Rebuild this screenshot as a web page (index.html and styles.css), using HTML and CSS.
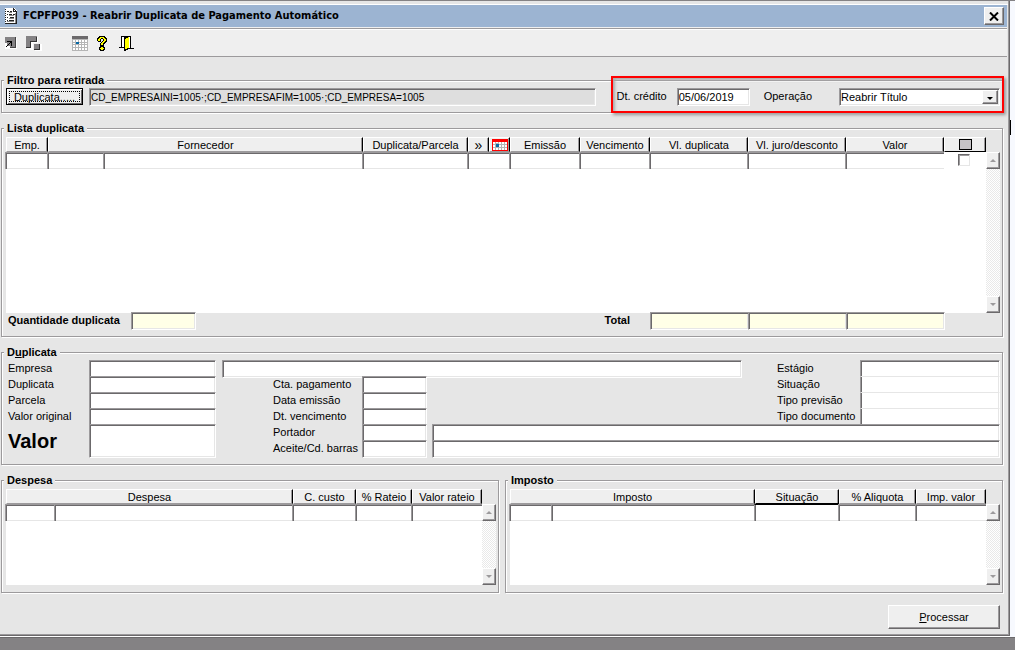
FILE: index.html
```html
<!DOCTYPE html>
<html lang="pt-BR">
<head>
    <meta charset="UTF-8">
    <meta name="viewport" content="width=device-width, initial-scale=1.0">
    <title>FCPFP039 - Reabrir Duplicata de Pagamento Automático</title>
    <link rel="stylesheet" href="styles.css">
</head>
<body>
    <div class="workspace">
        <main class="window">
            <header class="titlebar">
                <svg class="icon" width="13" height="16" viewBox="0 0 13 16" shape-rendering="crispEdges">
                    <path d="M0 0h9l3 3v13H0z" fill="#fff"/>
                    <path d="M0 1h1v1H0zM0 3h1v1H0zM0 5h1v1H0zM0 7h1v1H0zM0 9h1v1H0zM0 11h1v1H0zM0 13h1v1H0zM8 0h1v3h3v1H8zM9 1h1v1H9zM10 2h1v1h-1zM11 3h1v13H0v-1h11z" fill="#222"/>
                    <path d="M2 3h2v1H2zM2 6h1v1H2zM4 6h3v1H4zM2 9h1v1H2zM5 9h4v1H5zM2 12h1v1H2zM4 12h5v1H4zM5 3h2v1H5zM8 6h2v1H8z" fill="#222"/>
                    <path d="M4 4h3v1H4zM4 7h5v1H4zM4 10h5v1H4zM2 13h7v1H2zM10 5h1v10h-1z" fill="#8a8a8a"/>
                </svg>
                <h1>FCPFP039 - Reabrir Duplicata de Pagamento Automático</h1>
                <button class="close" aria-label="Fechar">
                    <svg width="10" height="9" viewBox="0 0 10 9"><path d="M1 0.5 9 8.5M9 0.5 1 8.5" stroke="#000" stroke-width="2"/></svg>
                </button>
            </header>

            <nav class="toolbar">
                <button class="tool" aria-label="Voltar">
                    <svg width="12" height="12" viewBox="0 0 12 12" shape-rendering="crispEdges">
                        <path d="M0 1h12v11H0z" fill="#fff"/>
                        <path d="M0 0h11v11H5V9H2V6H0z" fill="#848284"/>
                        <path d="M10 0h1v11H5v-1h5z" fill="#444"/>
                        <path d="M2 4h5v5H6V6H5v1H4v1H3v1H2v1H1V9h1V8h1V7h1V6h1V5H2z" fill="#000"/>
                    </svg>
                </button>
                <button class="tool" aria-label="Janelas">
                    <svg width="16" height="15" viewBox="0 0 16 15" shape-rendering="crispEdges">
                        <path d="M1 1h11v6H7v7H1zM9 8h7v7H9z" fill="#fff"/>
                        <path d="M0 0h11v6H5v6H0zM8 8h6v6H8z" fill="#848284"/>
                        <path d="M10 1h1v5H5v6H0v-1h4V5h6zM13 8h1v6H8v-1h5z" fill="#333"/>
                    </svg>
                </button>
                <button class="tool tool-gap" aria-label="Calendário">
                    <svg width="16" height="15" viewBox="0 0 16 15" shape-rendering="crispEdges">
                        <path d="M0 0h16v15H0z" fill="#b5b5b5"/>
                        <path d="M0 0h16v3H0z" fill="#6b696b"/>
                        <path d="M1 4h2v2H1zM4 4h2v2H4zM7 4h2v2H7zM10 4h2v2h-2zM13 4h2v2h-2zM1 7h2v1H1zM7 7h2v1H7zM10 7h2v1h-2zM13 7h2v1h-2zM1 9h2v2H1zM4 9h2v2H4zM7 9h2v2H7zM10 9h2v2h-2zM13 9h2v2h-2zM1 12h2v2H1zM4 12h2v2H4zM7 12h2v2H7zM10 12h2v2h-2zM13 12h2v2h-2z" fill="#fff"/>
                        <path d="M4 6h3v2H4z" fill="#0869a5"/>
                    </svg>
                </button>
                <button class="tool" aria-label="Ajuda">
                    <svg width="13" height="15" viewBox="0 0 13 15" shape-rendering="crispEdges">
                        <path d="M2 0h6v1h1v1h1v4H9v1H8v1H7v2H3V7h1V6h1V5h1V3H4v3H1V5H0V2h1V1h1zM3 10h4v1h1v3H7v1H3v-1H2v-3h1z" fill="#000"/>
                        <path d="M3 1h4v1h1v1h1v2H8v1H7v1H6v2H4V7h1V6h1V5h1V3H6V2H4v1H3v2H1V3h1V2h1zM4 11h2v1h1v1H6v1H4v-1H3v-1h1z" fill="#ff0"/>
                    </svg>
                </button>
                <button class="tool" aria-label="Sair">
                    <svg width="15" height="15" viewBox="0 0 15 15" shape-rendering="crispEdges">
                        <path d="M2 0h10v12h3v1H9v1H7v1H5v-3H0v-1h2z" fill="#000"/>
                        <path d="M3 1h2v10H3z" fill="#fff"/>
                        <path d="M10 1h1v11h-1z" fill="#fff"/>
                        <path d="M6 3h1V2h2V1h1v11H8v1H6z" fill="#ff0"/>
                    </svg>
                </button>
            </nav>

            <form class="content">
                <fieldset class="panel">
                    <legend>Filtro para retirada</legend>
                    <div class="filter">
                        <button type="button" class="btn-default">Duplicata.....</button>
                        <input type="text" class="field filter-text" aria-label="Filtro" value="CD_EMPRESAINI=1005·;CD_EMPRESAFIM=1005·;CD_EMPRESA=1005" readonly>
                        <div class="highlight">
                            <label for="credito">Dt. crédito</label>
                            <input type="text" id="credito" class="field date" value="05/06/2019">
                            <label for="operacao">Operação</label>
                            <div class="combo">
                                <select id="operacao" class="field">
                                    <option>Reabrir Título</option>
                                </select>
                                <span class="combo-arrow"></span>
                            </div>
                        </div>
                    </div>
                </fieldset>

                <fieldset class="panel">
                    <legend>Lista duplicata</legend>
                    <div class="list list-tall">
                        <table>
                            <colgroup>
                                <col class="w42"><col class="w56"><col><col class="w105"><col class="w21"><col class="w21">
                                <col class="w70"><col class="w70"><col class="w98"><col class="w98"><col class="w98"><col class="w42">
                            </colgroup>
                            <thead>
                                <tr>
                                    <th>Emp.</th>
                                    <th colspan="2">Fornecedor</th>
                                    <th>Duplicata/Parcela</th>
                                    <th class="more">»</th>
                                    <th class="icon-head">
                                        <svg width="16" height="12" viewBox="0 0 16 12" shape-rendering="crispEdges">
                                            <path d="M0 0h16v12H0z" fill="#f00"/>
                                            <path d="M1 3h14v8H1z" fill="#b5b5b5"/>
                                            <path d="M1 3h2v2H1zM4 3h2v1H4zM7 3h2v2H7zM10 3h2v2h-2zM13 3h2v2h-2zM1 6h2v2H1zM7 6h2v2H7zM10 6h2v2h-2zM13 6h2v2h-2zM1 9h2v2H1zM4 9h2v2H4zM7 9h2v2H7zM10 9h2v2h-2zM13 9h2v2h-2z" fill="#fff"/>
                                            <path d="M4 5h3v3H4z" fill="#0869a5"/>
                                        </svg>
                                    </th>
                                    <th>Emissão</th>
                                    <th>Vencimento</th>
                                    <th>Vl. duplicata</th>
                                    <th>Vl. juro/desconto</th>
                                    <th>Valor</th>
                                    <th class="icon-head active"><span class="mark"></span></th>
                                </tr>
                            </thead>
                            <tbody>
                                <tr>
                                    <td><input type="text" class="field" aria-label="Emp."></td>
                                    <td><input type="text" class="field" aria-label="Código do fornecedor"></td>
                                    <td><input type="text" class="field" aria-label="Fornecedor"></td>
                                    <td><input type="text" class="field" aria-label="Duplicata/Parcela"></td>
                                    <td colspan="2"><input type="text" class="field" aria-label="Sequência"></td>
                                    <td><input type="text" class="field" aria-label="Emissão"></td>
                                    <td><input type="text" class="field" aria-label="Vencimento"></td>
                                    <td><input type="text" class="field" aria-label="Vl. duplicata"></td>
                                    <td><input type="text" class="field" aria-label="Vl. juro/desconto"></td>
                                    <td><input type="text" class="field" aria-label="Valor"></td>
                                    <td class="check"><input type="checkbox" aria-label="Selecionar"></td>
                                </tr>
                            </tbody>
                        </table>
                        <div class="scrollbar">
                            <button type="button" class="up" aria-label="Subir"></button>
                            <button type="button" class="down" aria-label="Descer"></button>
                        </div>
                    </div>
                    <div class="totals">
                        <label for="qtd">Quantidade duplicata</label>
                        <input type="text" id="qtd" class="field sum-small" readonly>
                        <label for="total" class="total-label">Total</label>
                        <input type="text" id="total" class="field sum" readonly>
                        <input type="text" class="field sum" aria-label="Total juro/desconto" readonly>
                        <input type="text" class="field sum" aria-label="Total valor" readonly>
                    </div>
                </fieldset>

                <fieldset class="panel">
                    <legend>D<u>u</u>plicata</legend>
                    <div class="details">
                        <label class="l1 r1" for="empresa">Empresa</label>
                        <input type="text" id="empresa" class="field f1 r1">
                        <label class="l1 r2" for="duplicata">Duplicata</label>
                        <input type="text" id="duplicata" class="field f1 r2">
                        <label class="l1 r3" for="parcela">Parcela</label>
                        <input type="text" id="parcela" class="field f1 r3">
                        <label class="l1 r4" for="original">Valor original</label>
                        <input type="text" id="original" class="field f1 r4">
                        <label class="l1 big" for="valor">Valor</label>
                        <input type="text" id="valor" class="field f1 big">

                        <input type="text" class="field name r1" aria-label="Nome da empresa">
                        <label class="l2 r2" for="conta">Cta. pagamento</label>
                        <input type="text" id="conta" class="field f2 r2">
                        <label class="l2 r3" for="emissao">Data emissão</label>
                        <input type="text" id="emissao" class="field f2 r3">
                        <label class="l2 r4" for="vencimento">Dt. vencimento</label>
                        <input type="text" id="vencimento" class="field f2 r4">
                        <label class="l2 r5" for="portador">Portador</label>
                        <input type="text" id="portador" class="field f2 r5">
                        <label class="l2 r6" for="aceite">Aceite/Cd. barras</label>
                        <input type="text" id="aceite" class="field f2 r6">

                        <label class="l3 r1" for="estagio">Estágio</label>
                        <input type="text" id="estagio" class="field f3 r1">
                        <label class="l3 r2" for="situacao">Situação</label>
                        <input type="text" id="situacao" class="field f3 r2 joined">
                        <label class="l3 r3" for="previsao">Tipo previsão</label>
                        <input type="text" id="previsao" class="field f3 r3 joined">
                        <label class="l3 r4" for="documento">Tipo documento</label>
                        <input type="text" id="documento" class="field f3 r4 joined">

                        <input type="text" class="field wide r5" aria-label="Nome do portador">
                        <input type="text" class="field wide r6" aria-label="Código de barras">
                    </div>
                </fieldset>

                <div class="columns">
                    <fieldset class="panel">
                        <legend>Despesa</legend>
                        <div class="list">
                            <table>
                                <colgroup><col class="w49"><col><col class="w63"><col class="w56"><col class="w70"></colgroup>
                                <thead>
                                    <tr>
                                        <th colspan="2">Despesa</th>
                                        <th>C. custo</th>
                                        <th>% Rateio</th>
                                        <th>Valor rateio</th>
                                    </tr>
                                </thead>
                                <tbody>
                                    <tr>
                                        <td><input type="text" class="field" aria-label="Código da despesa"></td>
                                        <td><input type="text" class="field" aria-label="Despesa"></td>
                                        <td><input type="text" class="field" aria-label="C. custo"></td>
                                        <td><input type="text" class="field" aria-label="% Rateio"></td>
                                        <td><input type="text" class="field" aria-label="Valor rateio"></td>
                                    </tr>
                                </tbody>
                            </table>
                            <div class="scrollbar">
                                <button type="button" class="up" aria-label="Subir"></button>
                                <button type="button" class="down" aria-label="Descer"></button>
                            </div>
                        </div>
                    </fieldset>

                    <fieldset class="panel">
                        <legend>Imposto</legend>
                        <div class="list">
                            <table>
                                <colgroup><col class="w42"><col><col class="w84"><col class="w77"><col class="w70"></colgroup>
                                <thead>
                                    <tr>
                                        <th colspan="2">Imposto</th>
                                        <th class="active">Situação</th>
                                        <th>% Aliquota</th>
                                        <th>Imp. valor</th>
                                    </tr>
                                </thead>
                                <tbody>
                                    <tr>
                                        <td><input type="text" class="field" aria-label="Código do imposto"></td>
                                        <td><input type="text" class="field" aria-label="Imposto"></td>
                                        <td><input type="text" class="field under-active" aria-label="Situação"></td>
                                        <td><input type="text" class="field" aria-label="% Aliquota"></td>
                                        <td><input type="text" class="field" aria-label="Imp. valor"></td>
                                    </tr>
                                </tbody>
                            </table>
                            <div class="scrollbar">
                                <button type="button" class="up" aria-label="Subir"></button>
                                <button type="button" class="down" aria-label="Descer"></button>
                            </div>
                        </div>
                    </fieldset>
                </div>

                <div class="actions">
                    <button type="button" class="btn"><u>P</u>rocessar</button>
                </div>
            </form>
        </main>
    </div>
</body>
</html>
```

FILE: styles.css
```css
*{
    box-sizing: border-box;
}
body{
    margin: 0;
    min-height: 100vh;
    background: #848284;
    color: #000;
    font: 11px/16px "Liberation Sans", Arial, sans-serif;
}
button,input,select{
    font: inherit;
    color: inherit;
    margin: 0;
    padding: 0;
    border-radius: 0;
}
svg{
    display: block;
}
u{
    text-underline-offset: 1px;
}

/* WINDOW */
.workspace{
    position: relative;
    padding-right: 5px;
    border-top: 1px solid #848284;
    border-bottom: 1px solid #6b696b;
    background: #f7f9fe;
}
.workspace::after{
    content: "";
    position: absolute;
    top: 119px;
    right: 4px;
    width: 1px;
    height: 15px;
    background: #000;
}
.window{
    padding-top: 4px;
    background: #e6e6e6;
    border-right: 1px solid #6b696b;
    border-bottom: 1px solid #6b696b;
    box-shadow: inset -1px -1px #9c9a9c, inset 0 3px #e6e6e6, inset 0 4px #fff, 0 1px #fff;
    margin-bottom: 1px;
}
.titlebar{
    display: flex;
    align-items: center;
    height: 22px;
    margin-right: 2px;
    padding: 0 3px 0 5px;
    background: #9cb4d2;
}
.titlebar h1{
    flex: 1;
    margin: 0 0 0 5px;
    font: bold 11px/16px "DejaVu Sans Condensed", Tahoma, sans-serif;
}
.close{
    display: flex;
    align-items: center;
    justify-content: center;
    width: 20px;
    height: 18px;
    background: #efefef;
    border: 1px solid;
    border-color: #fff #6b696b #6b696b #fff;
    box-shadow: inset -1px -1px #9c9a9c;
}
.toolbar{
    display: flex;
    align-items: center;
    gap: 9px;
    height: 30px;
    margin-right: 2px;
    padding: 2px 5px 0;
    background: #efefef;
    border-top: 1px solid #efefef;
    border-bottom: 1px solid #9c9a9c;
    box-shadow: inset 0 1px #9c9a9c, inset 0 2px #fff;
}
.tool{
    background: none;
    border: 0;
}
.tool-gap{
    margin-left: 21px;
}
.content{
    display: flex;
    flex-direction: column;
    gap: 7px;
    padding: 15px 6px 6px 1px;
}

/* PANELS */
.panel{
    min-width: 0;
    margin: 0;
    padding: 0 2px 7px 4px;
    border: 1px solid #9c9a9c;
    box-shadow: 1px 1px #fff, inset 1px 1px #fff;
}
.panel legend{
    margin-left: -2px;
    padding: 0 3px;
    font-weight: bold;
    background: #e6e6e6;
}
.columns{
    display: flex;
    gap: 6px;
}
.columns .panel{
    flex: 1;
}

/* FIELDS */
.field{
    display: block;
    height: 18px;
    padding: 0 1px;
    background: #fff;
    border: 1px solid;
    border-color: #9c9a9c #fff #fff #9c9a9c;
    box-shadow: inset 1px 1px #6b696b, inset -1px -1px #e6e6e6;
    outline: 0;
}
.field.joined{
    border-top-color: #e6e6e6;
    box-shadow: inset 1px 0 #6b696b, inset -1px -1px #e6e6e6;
}

/* FILTER */
.filter{
    display: flex;
    height: 17px;
}
.btn-default{
    width: 77px;
    height: 17px;
    margin-right: 6px;
    padding-top: 1px;
    line-height: 14px;
    background: #efefef;
    border: 1px solid #000;
    box-shadow: inset 1px 1px #fff, inset -1px -1px #6b696b;
    outline: 1px dotted #000;
    outline-offset: -4px;
}
.filter-text{
    flex: 1;
    background: #dedede;
    font-size: 10px;
}
.highlight{
    position: relative;
    display: flex;
    margin-left: 15px;
    padding-left: 6px;
}
.highlight::after{
    content: "";
    position: absolute;
    top: -12px;
    right: -4px;
    bottom: -8px;
    left: 0;
    border: 2px solid #f00;
    box-shadow: 2px 2px 3px #999, inset 2px 2px 3px #aaa;
    pointer-events: none;
}
.date{
    width: 73px;
    margin: 0 14px 0 10px;
}
.combo{
    position: relative;
    width: 161px;
    margin-left: 27px;
}
.combo select{
    width: 100%;
    appearance: none;
}
.combo-arrow{
    position: absolute;
    top: 2px;
    right: 2px;
    width: 16px;
    height: 14px;
    background: #efefef;
    border: 1px solid;
    border-color: #fff #6b696b #6b696b #fff;
    box-shadow: inset -1px -1px #9c9a9c;
    pointer-events: none;
}
.combo-arrow::after{
    content: "";
    position: absolute;
    top: 6px;
    left: 4px;
    border: 3px solid transparent;
    border-top-color: #000;
    border-bottom: 0;
}

/* LISTS */
.list{
    display: flex;
    align-items: flex-start;
    height: 96px;
    margin-top: 1px;
    background: linear-gradient(#e6e6e6, #e6e6e6) right top / 14px 100% no-repeat #fff;
}
.list-tall{
    height: 176px;
}
.list table{
    flex: 1;
    width: 0;
    table-layout: fixed;
    border-collapse: separate;
    border-spacing: 0;
}
.list th{
    height: 15px;
    padding: 1px 0 0;
    font-weight: normal;
    line-height: 12px;
    text-align: center;
    background: #efefef;
    border: 1px solid;
    border-color: #fff #000 #9c9a9c #fff;
    box-shadow: inset -1px 0 #9c9a9c;
}
.list th.icon-head{
    padding: 0;
}
.list th svg{
    margin: 0 auto;
}
.list th.active{
    border-bottom-color: #000;
}
.list th.more{
    padding: 0;
    font-size: 14px;
}
.list td{
    padding: 0;
    vertical-align: top;
}
.list td .field{
    width: calc(100% + 1px);
    margin-left: -1px;
    border-right: 0;
    border-bottom: 0;
    height: 17px;
    box-shadow: inset 1px 1px #6b696b, inset 0 -1px #e6e6e6;
}
.list td .under-active{
    border-top-color: #000;
    box-shadow: inset 1px 0 #6b696b, inset 0 -1px #e6e6e6;
}
.mark{
    display: block;
    width: 13px;
    height: 11px;
    margin: 0 auto;
    background: #c6c3c6;
    border: 1px solid #000;
}
.list .check{
    padding: 2px 0 0 14px;
}
.check input{
    display: block;
    appearance: none;
    width: 12px;
    height: 12px;
    background: #fff;
    border: 1px solid;
    border-color: #6b696b #e6e6e6 #e6e6e6 #6b696b;
    box-shadow: inset 1px 1px #9c9a9c;
}
.w21{ width: 21px; }
.w42{ width: 42px; }
.w49{ width: 49px; }
.w56{ width: 56px; }
.w63{ width: 63px; }
.w70{ width: 70px; }
.w77{ width: 77px; }
.w84{ width: 84px; }
.w98{ width: 98px; }
.w105{ width: 105px; }

.scrollbar{
    display: flex;
    flex-direction: column;
    justify-content: space-between;
    align-self: stretch;
    width: 14px;
    margin-top: 15px;
    background: repeating-conic-gradient(#fff 0 25%, #e9e9e9 0 50%) 0 0 / 2px 2px;
}
.scrollbar button{
    display: flex;
    align-items: center;
    justify-content: center;
    height: 17px;
    background: #efefef;
    border: 1px solid;
    border-color: #fff #6b696b #6b696b #fff;
    box-shadow: inset -1px -1px #9c9a9c;
}
.scrollbar button::after{
    content: "";
    border: 3px solid transparent;
}
.scrollbar .up::after{
    border-top: 0;
    border-bottom-color: #9c9a9c;
}
.scrollbar .down::after{
    border-bottom: 0;
    border-top-color: #9c9a9c;
}

/* TOTALS */
.totals{
    display: flex;
    height: 16px;
    padding: 0 55px 0 2px;
    font-weight: bold;
    line-height: 14px;
}
.totals .field{
    margin-top: -1px;
    background: #ffffe7;
}
.sum{
    width: 99px;
}
.sum + .sum{
    margin-left: -1px;
}
.sum-small{
    width: 65px;
    margin-left: 11px;
}
.total-label{
    margin: 0 20px 0 auto;
}

/* DETAILS */
.details{
    display: grid;
    grid-template-columns: 83px 127px 6px 51px 89px 65px 5px 1fr 35px 83px 140px;
    grid-template-rows: repeat(6, 16px);
    margin-bottom: 1px;
}
.details .field{
    width: 100%;
}
.l1{ grid-column: 1; padding-left: 2px; }
.f1{ grid-column: 2; }
.l2{ grid-column: 5; }
.f2{ grid-column: 6; }
.l3{ grid-column: 10; }
.f3{ grid-column: 11; }
.name{ grid-column: 4 / 9; }
.wide{ grid-column: 8 / -1; }
.r1{ grid-row: 1; }
.r2{ grid-row: 2; }
.r3{ grid-row: 3; }
.r4{ grid-row: 4; }
.r5{ grid-row: 5; }
.r6{ grid-row: 6; }
.big{
    grid-row: 5 / 7;
    font-size: 20px;
    font-weight: bold;
    line-height: 34px;
}
.details .field.big{
    height: 34px;
}

/* ACTIONS */
.actions{
    display: flex;
    justify-content: flex-end;
    padding: 5px 3px 0 0;
}
.btn{
    width: 112px;
    height: 24px;
    background: #efefef;
    border: 1px solid;
    border-color: #fff #6b696b #6b696b #fff;
    box-shadow: inset -1px -1px #9c9a9c;
}
```
